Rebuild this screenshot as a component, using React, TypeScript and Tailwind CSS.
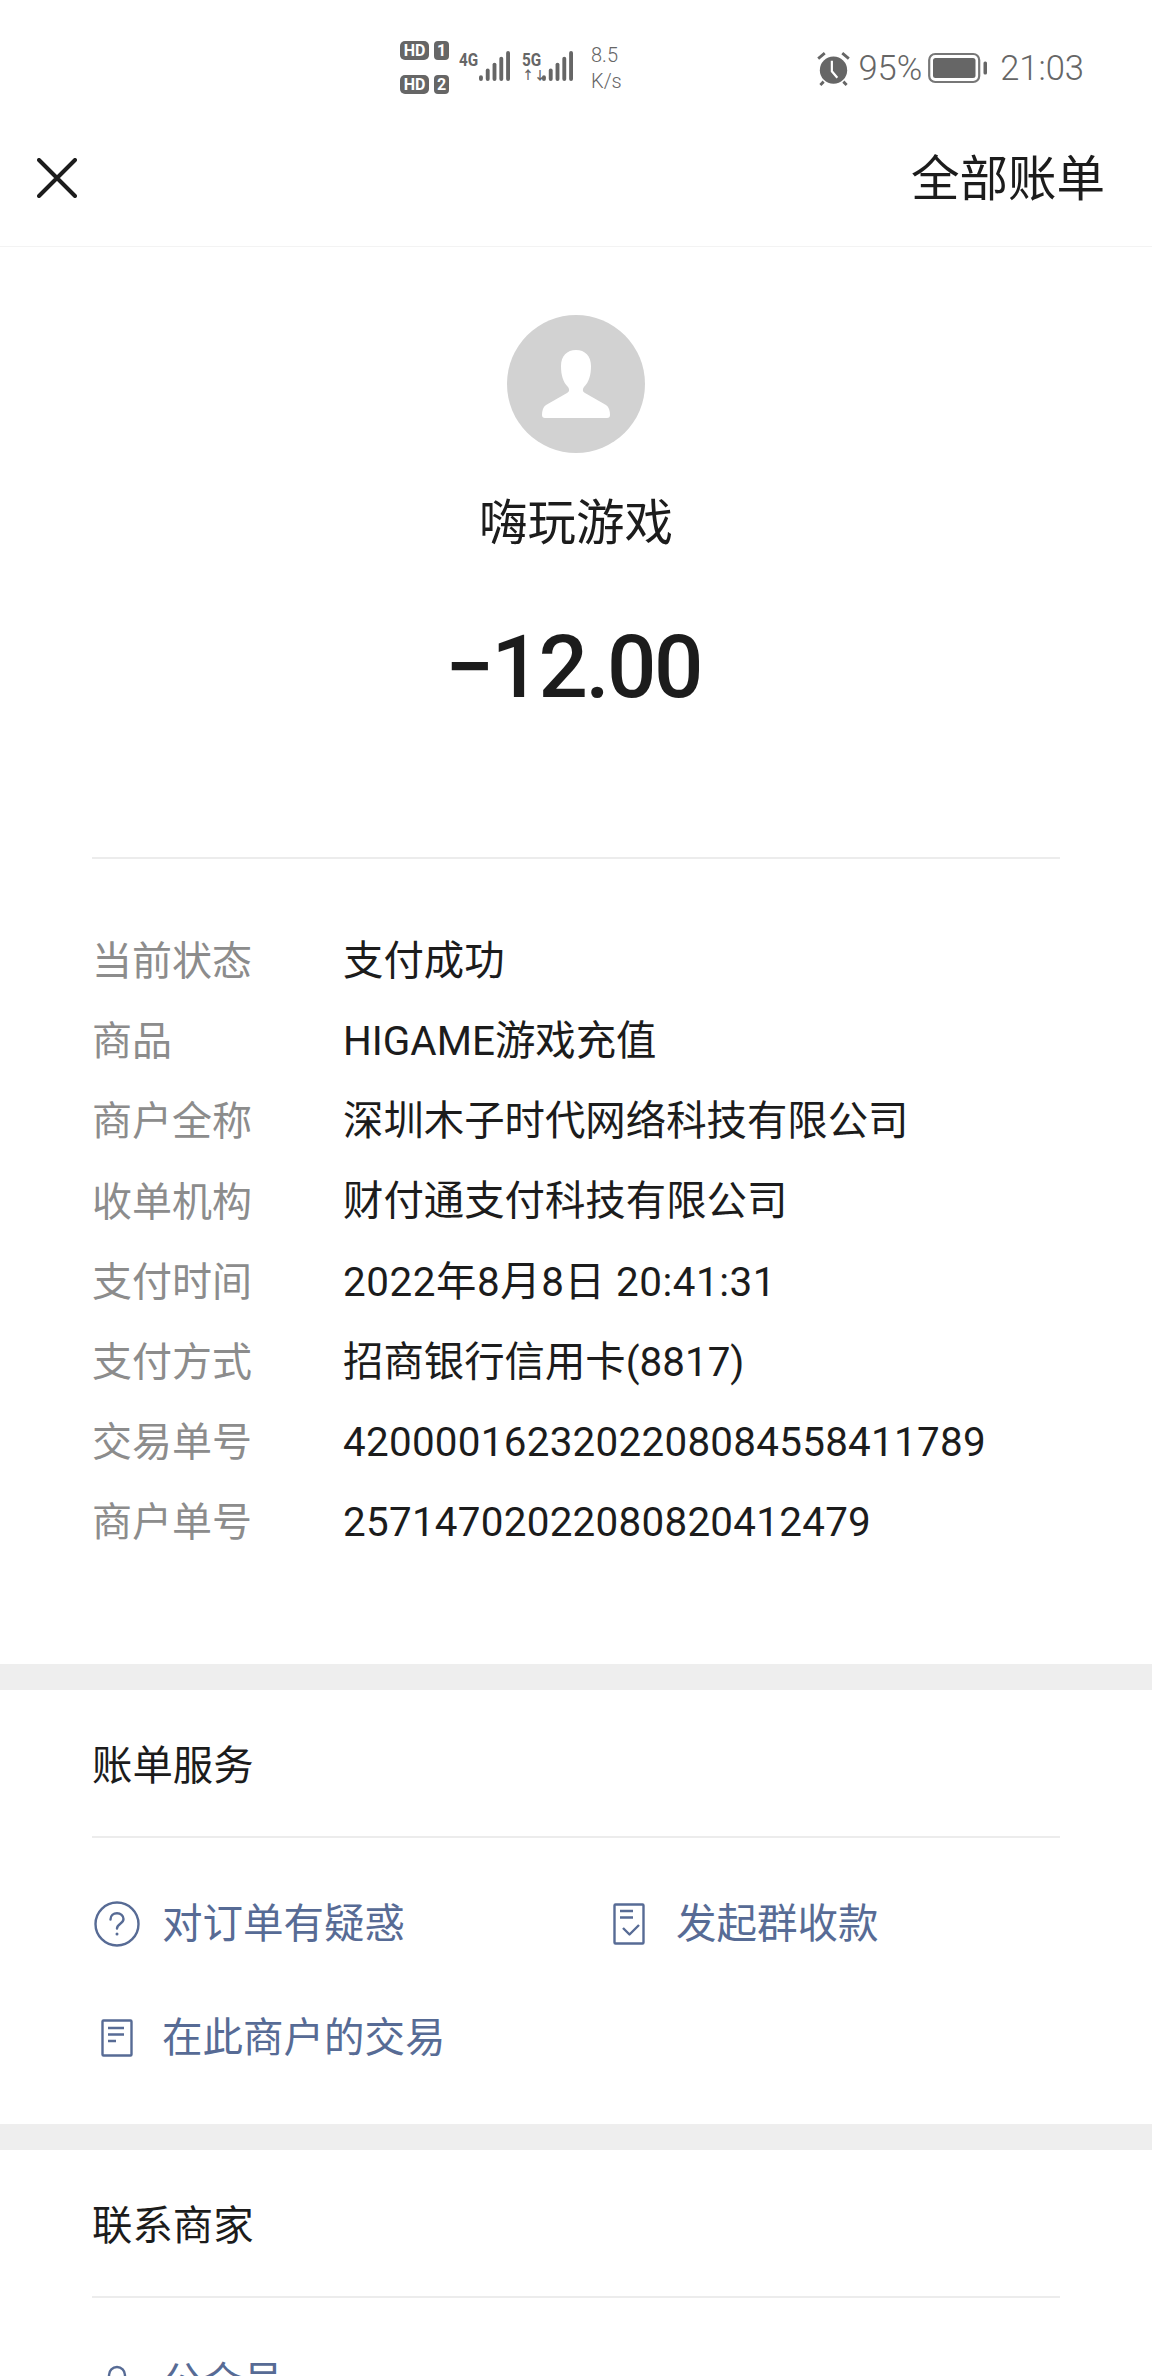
import React from 'react'

const rows = [
  { label: '当前状态', value: '支付成功' },
  { label: '商品', value: 'HIGAME游戏充值' },
  { label: '商户全称', value: '深圳木子时代网络科技有限公司' },
  { label: '收单机构', value: '财付通支付科技有限公司' },
  { label: '支付时间', value: '2022年8月8日 20:41:31', spacing: 'tracking-[0.55px]' },
  { label: '支付方式', value: '招商银行信用卡(8817)' },
  { label: '交易单号', value: '4200001623202208084558411789', spacing: 'tracking-[0.26px]' },
  { label: '商户单号', value: '25714702022080820412479', spacing: 'tracking-[0.26px]' },
]

const Bars = ({ className }: { className?: string }) => (
  <svg viewBox="0 0 34 32" className={className} fill="#666">
    <rect x="1" y="25" width="4" height="6" rx="2" />
    <rect x="8" y="18" width="4" height="13" rx="2" />
    <rect x="15" y="12" width="4" height="19" rx="2" />
    <rect x="22" y="6" width="4" height="25" rx="2" />
    <rect x="29" y="0" width="4" height="31" rx="2" />
  </svg>
)

const Hd = ({ n }: { n: string }) => (
  <div className="flex items-center gap-[5px]">
    <span className="w-[29px] h-[19px] rounded-[5px] bg-[#666] text-white text-[16px] font-bold leading-[19px] text-center">HD</span>
    <span className="w-[15px] h-[19px] rounded-[4px] bg-[#666] text-white text-[16px] font-bold leading-[19px] text-center">{n}</span>
  </div>
)

const StatusBar = () => (
  <div className="h-[130px] flex text-[#666]">
    <div className="flex items-start pl-[400px] pt-[41px]">
      <div className="flex flex-col gap-[15px]">
        <Hd n="1" />
        <Hd n="2" />
      </div>
      <div className="flex items-start ml-[10px] mt-[10px]">
        <span className="text-[18px] font-bold leading-[17px] w-[19px] scale-x-[0.85] origin-left">4G</span>
        <Bars className="w-[33px] h-[31px]" />
      </div>
      <div className="flex items-start ml-[11px] mt-[10px] relative">
        <span className="text-[18px] font-bold leading-[17px] w-[19px] scale-x-[0.85] origin-left">5G</span>
        <span className="absolute left-0 top-[19px] text-[12px] font-bold leading-[12px] whitespace-nowrap">↑↓</span>
        <Bars className="w-[33px] h-[31px]" />
      </div>
      <div className="ml-[17px] mt-[1px] text-[20px] leading-[26px] font-light">
        <div>8.5</div>
        <div>K/s</div>
      </div>
    </div>
    <div className="flex items-center h-[136px] ml-auto pr-[68px] text-[34.5px] font-light">
      <svg viewBox="0 0 32 32" className="w-[35px] h-[35px] mr-[7px]">
        <circle cx="16" cy="17.500" r="12.500" fill="#666" />
        <path d="M2 7l6-5M30 7l-6-5M7 28l-3 3M25 28l3 3" stroke="#666" strokeWidth="2.600" fill="none" />
        <path d="M14.500 9v9.500l5 6" stroke="#fff" strokeWidth="2" fill="none" />
      </svg>
      <span className="leading-none">95%</span>
      <svg viewBox="0 0 60 32" className="w-[60px] h-[32px] ml-[6px]">
        <rect x="1.200" y="2" width="50" height="28" rx="6" fill="none" stroke="#777" strokeWidth="2.200" />
        <rect x="5" y="6" width="42.500" height="20" rx="2.500" fill="#666" />
        <rect x="55.500" y="9.500" width="3.500" height="13" rx="1.500" fill="#666" />
      </svg>
      <span className="leading-none ml-[12px]">21:03</span>
    </div>
  </div>
)

const LinkItem = ({ icon, text, className }: { icon: React.ReactNode; text: string; className?: string }) => (
  <div className={'flex items-center ' + (className ?? '')}>
    <div className="w-[70px] h-[50px] flex items-center">{icon}</div>
    <span className="text-[40.5px] leading-[50px] text-[#576b95]">{text}</span>
  </div>
)

const QuestionIcon = () => (
  <svg viewBox="0 0 46 46" className="w-[46px] h-[46px] ml-[2px]" fill="none" stroke="#576b95" strokeWidth="2.400">
    <circle cx="23" cy="23" r="21.500" />
    <path d="M16.500 18.500c0-3.800 2.900-6.300 6.500-6.300s6.500 2.500 6.500 5.800c0 4.700-6.500 4.700-6.500 9.500" strokeLinecap="round" />
    <circle cx="23" cy="33" r="1.500" fill="#576b95" stroke="none" />
  </svg>
)

const CheckDocIcon = () => (
  <svg viewBox="0 0 32 42" className="w-[32px] h-[42px] ml-[7px]" fill="none" stroke="#576b95" strokeWidth="2.400" strokeLinejoin="round">
    <rect x="1.500" y="1.500" width="29" height="39" rx="1" />
    <path d="M7 8h13M7 14.500h13M10 25l6.500 6.500L26 22" />
  </svg>
)

const ListDocIcon = () => (
  <svg viewBox="0 0 32 38" className="w-[32px] h-[38px] ml-[9px]" fill="none" stroke="#576b95" strokeWidth="2.400" strokeLinejoin="round">
    <rect x="1.500" y="1.500" width="29" height="35" rx="1" />
    <path d="M7 9h16M7 15.500h16M7 22h8" />
  </svg>
)

const SectionTitle = ({ title }: { title: string }) => (
  <div className="h-[148px] pt-[50px] mx-[92px] border-b-2 border-[#ececec] text-[40.4px] leading-[54px] text-[#1c1c1c]">
    {title}
  </div>
)

export default function App() {
  return (
    <div className="w-[1152px] h-[2376px] overflow-hidden bg-white font-['Roboto','Noto_Sans_CJK_SC',sans-serif]">
      <StatusBar />

      <header className="h-[117px] flex items-center justify-between pl-[37px] pr-[47px] border-b border-[#f3f3f3]">
        <svg viewBox="0 0 40 40" className="w-[40px] h-[40px] -mt-[20px]" stroke="#1c1c1c" strokeWidth="4" strokeLinecap="round">
          <path d="M2 2l36 36M38 2L2 38" />
        </svg>
        <span className="text-[48.5px] leading-[60px] text-[#1c1c1c] -mt-[17px]">全部账单</span>
      </header>

      <section className="flex flex-col items-center pt-[68px]">
        <div className="w-[138px] h-[138px] rounded-full bg-[#d2d2d2] flex items-center justify-center">
          <svg viewBox="0 0 70 68" className="w-[70px] h-[68px]" fill="#fff">
            <path d="M35 0c-9 0-15 6-15 16 0 9 2 16 7 21 2 3 1 5-1 6L5 55c-3 2-4 6-4 10 0 2 1 3 3 3h62c2 0 3-1 3-3 0-4-1-8-4-10L44 43c-2-1-3-3-1-6 5-5 7-12 7-21C50 6 44 0 35 0z" />
          </svg>
        </div>
        <div className="mt-[41px] text-[48.5px] leading-[60px] text-[#1c1c1c]">嗨玩游戏</div>
        <div className="mt-[59px] pr-[6px] text-[87px] leading-[108px] font-medium tracking-[-2.5px] text-[#1c1c1c]">−12.00</div>
      </section>

      <div className="mx-[92px] mt-[136px] border-t-2 border-[#ececec] pt-[63px] pb-[100px]">
        {rows.map((row) => (
          <div key={row.label} className="flex h-[80.2px] items-center text-[40.4px]">
            <span className="w-[252px] text-[40px] text-[#8c8c8c]">{row.label}</span>
            <span className={'-ml-[1px] text-[#1c1c1c] ' + (row.spacing ?? '')}>{row.value}</span>
          </div>
        ))}
      </div>

      <div className="h-[26px] bg-[#eeeeee]" />
      <SectionTitle title="账单服务" />
      <div className="mx-[92px] pt-[61px] h-[286px]">
        <div className="flex">
          <LinkItem className="w-[514px]" icon={<QuestionIcon />} text="对订单有疑惑" />
          <LinkItem icon={<CheckDocIcon />} text="发起群收款" />
        </div>
        <LinkItem className="mt-[64px]" icon={<ListDocIcon />} text="在此商户的交易" />
      </div>

      <div className="h-[26px] bg-[#eeeeee]" />
      <SectionTitle title="联系商家" />
      <div className="mx-[92px] pt-[59px]">
        <LinkItem
          icon={
            <svg viewBox="0 0 46 46" className="w-[46px] h-[46px] ml-[2px]" fill="none" stroke="#576b95" strokeWidth="2.400">
              <circle cx="23" cy="16" r="8" />
              <path d="M3 47c0-10 9-17 20-17s20 7 20 17" />
            </svg>
          }
          text="公众号"
        />
      </div>
    </div>
  )
}
